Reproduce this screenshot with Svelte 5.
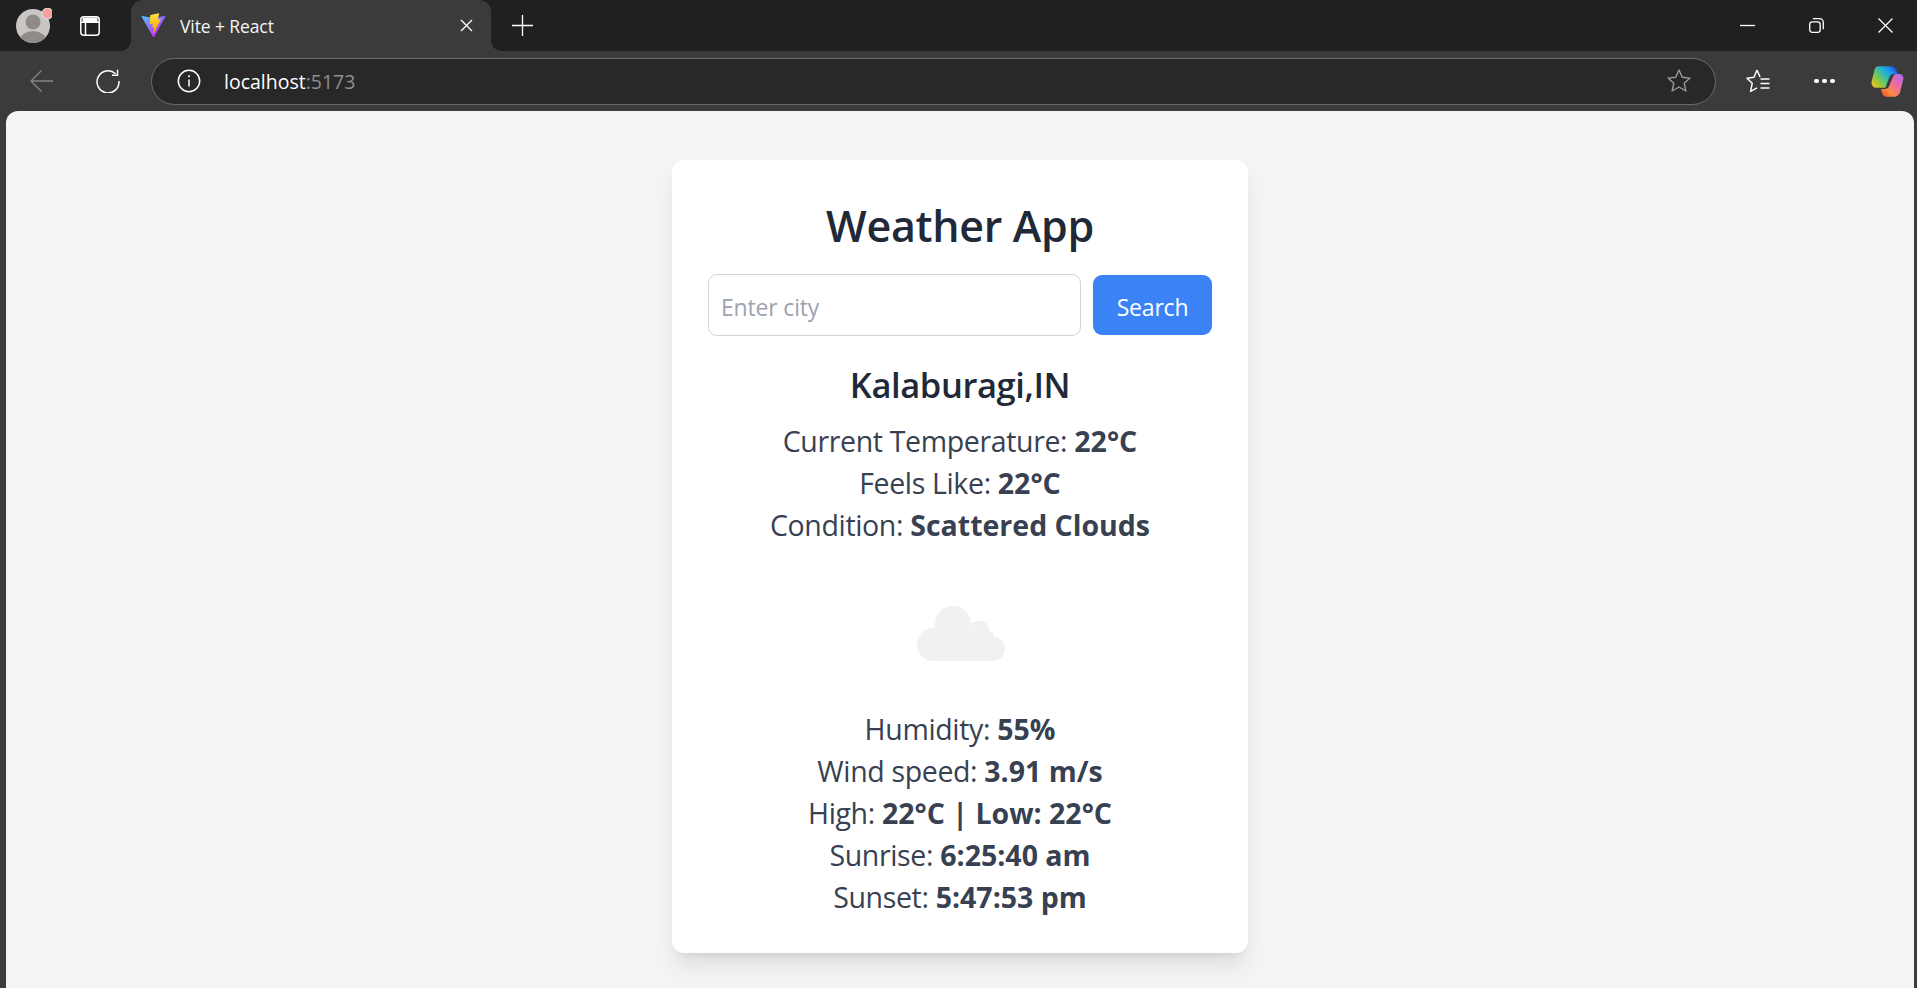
<script>
  const top = [
    ['Current Temperature: ', '22°C'],
    ['Feels Like: ', '22°C'],
    ['Condition: ', 'Scattered Clouds']
  ];
  const bottom = [
    ['Humidity: ', '55%'],
    ['Wind speed: ', '3.91 m/s'],
    ['High: ', '22°C | Low: 22°C'],
    ['Sunrise: ', '6:25:40 am'],
    ['Sunset: ', '5:47:53 pm']
  ];
</script>

<div class="window">
  <header class="tabstrip">
    <div class="profile">
      <svg width="36" height="36" viewBox="0 0 36 36">
        <defs><clipPath id="av"><circle cx="17" cy="18" r="17" /></clipPath></defs>
        <circle cx="17" cy="18" r="17" fill="#c9c7c3" />
        <g clip-path="url(#av)" fill="#8f8b88">
          <circle cx="17" cy="14" r="7.5" />
          <ellipse cx="17" cy="32" rx="13" ry="9" />
        </g>
        <circle cx="31.500" cy="5.500" r="5.500" fill="#f7a09d" stroke="#e8e8e8" stroke-width="1" />
      </svg>
    </div>
    <svg class="sidebar-icon" width="20" height="20" viewBox="0 0 20 20" fill="none" stroke="#fff" stroke-width="1.500">
      <rect x=".8" y=".8" width="18.400" height="18.400" rx="3" />
      <path d="M.8 6.200h18.400M5.500 6.200v13" />
      <path d="M2.500 1.500h15v4.700h-15z" fill="#fff" stroke="none" />
    </svg>
    <div class="tab">
      <svg class="favicon" width="25" height="25" viewBox="0 0 410 404">
        <defs>
          <linearGradient id="vb" gradientUnits="userSpaceOnUse" x1="6" y1="33" x2="235" y2="344">
            <stop offset="0" stop-color="#41d1ff" /><stop offset="1" stop-color="#bd34fe" />
          </linearGradient>
          <linearGradient id="vy" gradientUnits="userSpaceOnUse" x1="194.65" y1="8.8" x2="236.08" y2="292.99">
            <stop offset="0" stop-color="#ffea83" /><stop offset=".0833" stop-color="#ffdd35" /><stop offset="1" stop-color="#ffa800" />
          </linearGradient>
        </defs>
        <path d="M399.641 59.5246L215.643 388.545C211.844 395.338 202.084 395.378 198.228 388.618L10.5817 59.5563C6.38087 52.1896 12.6802 43.2665 21.0281 44.7586L205.223 77.6824C206.398 77.8924 207.601 77.8904 208.776 77.6763L389.119 44.8058C397.439 43.2894 403.768 52.1434 399.641 59.5246Z" fill="url(#vb)" />
        <path d="M292.965 1.5744L156.801 28.2552C154.563 28.6937 152.906 30.5903 152.771 32.8664L144.395 174.33C144.198 177.662 147.258 180.248 150.51 179.498L188.42 170.749C191.967 169.931 195.172 173.055 194.443 176.622L183.18 231.775C182.422 235.487 185.907 238.661 189.532 237.56L212.947 230.446C216.577 229.344 220.065 232.527 219.297 236.242L201.398 322.875C200.278 328.294 207.486 331.249 210.492 326.603L212.5 323.5L323.454 102.072C325.312 98.3645 322.108 94.1369 318.036 94.9228L279.014 102.454C275.347 103.161 272.227 99.746 273.262 96.1583L298.731 7.86689C299.767 4.27314 296.636 .855181 292.965 1.5744Z" fill="url(#vy)" />
      </svg>
      <span class="tab-title">Vite + React</span>
      <svg class="tab-close" width="13" height="13" viewBox="0 0 13 13" stroke="#fff" stroke-width="1.300">
        <path d="M1 1l11 11M12 1L1 12" />
      </svg>
    </div>
    <svg class="plus" width="23" height="23" viewBox="0 0 23 23" stroke="#fff" stroke-width="1.300">
      <path d="M11.500 1v21M1 11.500h21" />
    </svg>
    <div class="window-controls">
      <svg width="15" height="15" viewBox="0 0 15 15" stroke="#fff" stroke-width="1.300"><path d="M0 7.500h15" /></svg>
      <svg width="15" height="15" viewBox="0 0 15 15" fill="none" stroke="#fff" stroke-width="1.300">
        <rect x=".7" y="3.800" width="10.500" height="10.500" rx="2.500" />
        <path d="M3.800 .7h6.700a3.800 3.800 0 0 1 3.800 3.800v6.700" />
      </svg>
      <svg width="15" height="15" viewBox="0 0 15 15" stroke="#fff" stroke-width="1.300"><path d="M.5.5l14 14M14.500.5l-14 14" /></svg>
    </div>
  </header>

  <nav class="toolbar">
    <svg class="back" width="24" height="24" viewBox="0 0 24 24" fill="none" stroke="#858585" stroke-width="1.400">
      <path d="M1 12h22M11.500 1.500L1 12l10.500 10.500" />
    </svg>
    <svg class="reload" width="24" height="24" viewBox="0 0 24 24" fill="none" stroke="#fff" stroke-width="1.500">
      <path d="M19.500 4.800A11 11 0 1 0 23 12" />
      <path d="M21.500 .8v5.500h-5.500" />
    </svg>
    <div class="address">
      <svg class="info" width="24" height="24" viewBox="0 0 24 24" fill="none" stroke="#fff" stroke-width="1.500">
        <circle cx="12" cy="12" r="10.700" />
        <path d="M12 10.500v7" />
        <circle cx="12" cy="7.300" r="1" fill="#fff" stroke="none" />
      </svg>
      <span class="url"><span class="host">localhost</span><span class="port">:5173</span></span>
      <svg class="fav" width="26" height="26" viewBox="0 0 26 26" fill="none" stroke="#9a9a9a" stroke-width="1.400" stroke-linejoin="round">
        <path d="M13 2l3.300 7.300 7.700.8-5.800 5.200 1.700 7.700L13 19l-6.900 4 1.700-7.700L2 10.100l7.700-.8z" />
      </svg>
    </div>
    <svg class="favlist" width="24" height="24" viewBox="0 0 24 24" fill="none" stroke="#fff" stroke-width="1.500" stroke-linejoin="round">
      <path d="M11 1L8 8.300 1 9.300l5.200 5-1.600 8 6.400-3.400M11 1l3 7" />
      <path d="M14.500 10h9M14.500 14.500h9M14.500 19h9" />
    </svg>
    <div class="more"><i></i><i></i><i></i></div>
    <svg class="copilot" width="33" height="31" viewBox="18 17 101 96">
      <defs>
        <linearGradient id="c1" gradientUnits="userSpaceOnUse" x1="25" y1="82" x2="92" y2="20">
          <stop offset="0" stop-color="#f2c21a" /><stop offset=".3" stop-color="#7fc84a" /><stop offset=".6" stop-color="#27b5c9" /><stop offset=".8" stop-color="#1f8ff0" /><stop offset="1" stop-color="#1a46d8" />
        </linearGradient>
        <linearGradient id="c2" gradientUnits="userSpaceOnUse" x1="55" y1="110" x2="115" y2="45">
          <stop offset="0" stop-color="#f0532c" /><stop offset=".25" stop-color="#f98a3f" /><stop offset=".6" stop-color="#f06aa8" /><stop offset="1" stop-color="#ac6ce8" />
        </linearGradient>
      </defs>
      <path d="M40 18H80C88 18 93 22 96 30L100 42H88C80 42 76 47 73 55L62 84H32C22 84 17 72 20 62L28 30C30 22 34 18 40 18Z" fill="url(#c1)" />
      <path d="M96 42H105C115 42 120 50 117 60L108 95C106 105 98 112 90 112H65C58 112 54 108 52 102L48 88H60C68 88 72 84 75 76L85 52C87 46 90 42 96 42Z" fill="url(#c2)" />
    </svg>
  </nav>

  <main class="page">
    <section class="card">
      <h1>Weather App</h1>
      <form class="search" onsubmit={(e) => e.preventDefault()}>
        <input type="text" placeholder="Enter city" />
        <button type="submit">Search</button>
      </form>
      <h2>Kalaburagi,IN</h2>
      <div class="rows">
        {#each top as [label, value]}
          <p>{label}<strong>{value}</strong></p>
        {/each}
      </div>
      <div class="icon-box">
        <svg width="88" height="55" viewBox="0 0 88 55" fill="#f1f1f0">
          <circle cx="36" cy="18" r="18" />
          <path d="M53.500 17.800C56.500 15.500 60 14.700 63 14.700C69.500 14.700 73.500 21 73 31L54 40Z" />
          <circle cx="16.500" cy="38.500" r="16.500" />
          <circle cx="75.500" cy="42.500" r="12.500" />
          <rect x="16" y="26" width="60" height="29" />
        </svg>
      </div>
      <div class="rows">
        {#each bottom as [label, value]}
          <p>{label}<strong>{value}</strong></p>
        {/each}
      </div>
    </section>
  </main>
</div>

<style>
  :global(body) {
    margin: 0;
    background: #3b3b3b;
    overflow: hidden;
  }
  .window {
    width: 1917px;
    height: 988px;
    display: flex;
    flex-direction: column;
    overflow: hidden;
    font-family: "Open Sans", "Noto Sans", sans-serif;
  }
  .tabstrip {
    height: 51px;
    flex: none;
    background: #202020;
    display: flex;
    align-items: center;
  }
  .profile {
    width: 36px;
    height: 36px;
    margin-left: 16px;
    display: flex;
  }
  .sidebar-icon { margin-left: 28px; }
  .tab {
    position: relative;
    width: 360px;
    height: 51px;
    margin-left: 31px;
    padding: 0 18px 0 10px;
    box-sizing: border-box;
    background: #3b3b3b;
    border-radius: 12px 12px 0 0;
    display: flex;
    align-items: center;
    color: #fff;
  }
  .tab::before,
  .tab::after {
    content: "";
    position: absolute;
    bottom: 0;
    width: 10px;
    height: 10px;
  }
  .tab::before {
    left: -10px;
    background: radial-gradient(circle at 0 0, transparent 9.500px, #3b3b3b 10px);
  }
  .tab::after {
    right: -10px;
    background: radial-gradient(circle at 100% 0, transparent 9.500px, #3b3b3b 10px);
  }
  .favicon { flex: none; }
  .tab-title {
    margin-left: 14px;
    font-size: 17.500px;
    letter-spacing: -.1px;
    flex: 1;
    color: #f5f5f5;
  }
  .plus { margin-left: 20px; }
  .window-controls {
    margin-left: auto;
    display: flex;
    gap: 54px;
    margin-right: 24px;
  }
  .toolbar {
    height: 60px;
    flex: none;
    background: #3b3b3b;
    display: flex;
    align-items: center;
    box-sizing: border-box;
  }
  .back { margin-left: 30px; }
  .reload { margin-left: 42px; }
  .address {
    margin-left: 31px;
    width: 1565px;
    height: 47px;
    box-sizing: border-box;
    border: 1.500px solid #6b6b6b;
    border-radius: 24px;
    background: #282828;
    display: flex;
    align-items: center;
    padding: 0 23px 0 25px;
  }
  .url {
    margin-left: 23px;
    font-size: 19.500px;
    flex: 1;
  }
  .host { color: #fff; }
  .port { color: #8e8e8e; }
  .favlist { margin-left: 30px; }
  .more {
    margin-left: 44px;
    display: flex;
    gap: 3.500px;
  }
  .more i {
    width: 4.500px;
    height: 4.500px;
    border-radius: 50%;
    background: #fff;
  }
  .copilot { margin-left: 36px; }
  .page {
    flex: 1;
    margin: 0 3px 0 6px;
    background: #f3f4f6;
    border-radius: 12px 12px 0 0;
    padding-top: 49px;
    display: flex;
    justify-content: center;
    align-items: flex-start;
    min-height: 0;
  }
  .card {
    width: 576px;
    flex: none;
    box-sizing: border-box;
    padding: 36px 36px 35px;
    background: #fff;
    border-radius: 12px;
    box-shadow: 0 15px 22px -4px rgba(0, 0, 0, .1), 0 6px 9px -6px rgba(0, 0, 0, .1);
    text-align: center;
  }
  h1 {
    margin: 0 0 19px;
    font-size: 43px;
    line-height: 59px;
    letter-spacing: -.3px;
    font-weight: 600;
    color: #1f2937;
  }
  .search {
    display: flex;
    align-items: center;
    gap: 12px;
  }
  input {
    flex: 1;
    min-width: 0;
    height: 62px;
    box-sizing: border-box;
    border: 1.500px solid #d1d5db;
    border-radius: 9px;
    padding: 3px 12px 0;
    font: inherit;
    font-size: 23px;
    letter-spacing: -.18px;
    color: #1f2937;
    background: #fff;
    outline: none;
  }
  input::placeholder { color: #9ca3af; opacity: 1; }
  button {
    width: 119px;
    height: 60px;
    border: 0;
    border-radius: 9px;
    background: #3b82f6;
    color: #fff;
    font: inherit;
    font-size: 23px;
    letter-spacing: -.2px;
    padding: 3px 0 0;
  }
  h2 {
    margin: 25px 0 11px;
    font-size: 34.500px;
    line-height: 48px;
    letter-spacing: -.4px;
    font-weight: 600;
    color: #1f2937;
  }
  .rows p {
    margin: 0;
    font-size: 28.500px;
    letter-spacing: -.35px;
    line-height: 42px;
    color: #374151;
  }
  strong { font-weight: 700; letter-spacing: 0; }
  .icon-box {
    height: 162px;
    box-sizing: border-box;
    padding: 12px 0 0 2px;
    display: flex;
    align-items: center;
    justify-content: center;
  }
</style>
